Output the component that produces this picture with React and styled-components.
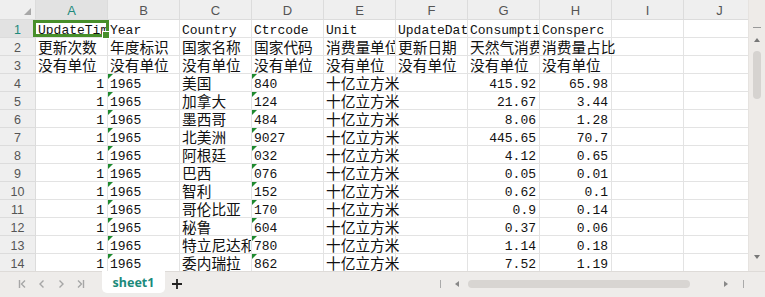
import React from "react";
import styled, { createGlobalStyle, css } from "styled-components";

const Global = createGlobalStyle`
  html, body { margin: 0; padding: 0; background: #fff; overflow: hidden; }
  #root { width: 765px; height: 297px; }
`;

const COLS = ["A", "B", "C", "D", "E", "F", "G", "H", "I", "J"];

const rows = [
  ["UpdateTime", "Year", "Country", "Ctrcode", "Unit", "UpdateDate", "Consumption", "Consperc"],
  ["更新次数", "年度标识", "国家名称", "国家代码", "消费量单位", "更新日期", "天然气消费量", "消费量占比"],
  ["没有单位", "没有单位", "没有单位", "没有单位", "没有单位", "没有单位", "没有单位", "没有单位"],
];
const data = [
  ["美国", "840", "415.92", "65.98"],
  ["加拿大", "124", "21.67", "3.44"],
  ["墨西哥", "484", "8.06", "1.28"],
  ["北美洲", "9027", "445.65", "70.7"],
  ["阿根廷", "032", "4.12", "0.65"],
  ["巴西", "076", "0.05", "0.01"],
  ["智利", "152", "0.62", "0.1"],
  ["哥伦比亚", "170", "0.9", "0.14"],
  ["秘鲁", "604", "0.37", "0.06"],
  ["特立尼达和多巴哥", "780", "1.14", "0.18"],
  ["委内瑞拉", "862", "7.52", "1.19"],
];

const grid = [
  ...rows.map((r) => r.map((v) => ({ v }))),
  ...data.map(([c, code, cons, perc]) => [
    { v: "1", num: true },
    { v: "1965", flag: true },
    { v: c },
    { v: code, flag: true },
    { v: "十亿立方米" },
    { v: "" },
    { v: cons, num: true },
    { v: perc, num: true },
  ]),
].map((r) => [...r, { v: "" }, { v: "" }]);

const isCjk = (s) => /[\u3400-\u9fff]/.test(s);

const Frame = styled.div`
  width: 765px;
  height: 297px;
  display: grid;
  grid-template-rows: 1fr 26px;
  overflow: hidden;
`;

const Main = styled.div`
  display: grid;
  grid-template-columns: 1fr 17px;
  min-height: 0;
  overflow: hidden;
`;

const Sheet = styled.div`
  display: grid;
  grid-template-columns: 36px repeat(10, 72px);
  grid-template-rows: 20px repeat(14, 18px);
  overflow: hidden;
  min-width: 0;
`;

const HeadBase = css`
  box-sizing: border-box;
  display: flex;
  align-items: center;
  justify-content: center;
  font-family: "Liberation Sans", Arial, sans-serif;
  font-size: 13px;
  border-right: 1px solid #dcdcdc;
  border-bottom: 1px solid #dcdcdc;
`;

const Corner = styled.div`
  ${HeadBase};
  background: #efefef;
  position: relative;
  &::after {
    content: "";
    position: absolute;
    right: 4px;
    bottom: 4px;
    border-left: 7px solid transparent;
    border-bottom: 7px solid #a8a8a8;
  }
`;

const ColHead = styled.div`
  ${HeadBase};
  background: ${(p) => (p.$active ? "#e2e2e2" : "#efefef")};
  color: ${(p) => (p.$active ? "#1f8a7c" : "#555")};
  padding-top: 1px;
`;

const RowHead = styled.div`
  ${HeadBase};
  background: ${(p) => (p.$active ? "#e2e2e2" : "#efefef")};
  color: ${(p) => (p.$active ? "#1f8a7c" : "#555")};
  font-size: 12.5px;
  padding-top: 2px;
`;

const Cell = styled.div`
  box-sizing: border-box;
  position: relative;
  border-right: 1px solid #e3e3e3;
  border-bottom: 1px solid #e3e3e3;
  z-index: ${(p) => (p.$selected ? 10 : p.$spill ? 2 : 1)};
  background: ${(p) => (p.$spill ? "transparent" : "#fff")};
  min-width: 0;
`;

const Selection = styled.span`
  position: absolute;
  left: -3px;
  top: 0;
  right: -2px;
  bottom: 0;
  border: 3px solid #478f2a;
  pointer-events: none;
  z-index: 5;
`;

const Handle = styled.span`
  position: absolute;
  right: -4px;
  bottom: -5px;
  width: 6px;
  height: 6px;
  background: #478f2a;
  border: 1px solid #fff;
  z-index: 6;
`;

const Text = styled.span`
  display: block;
  box-sizing: border-box;
  width: 100%;
  height: 100%;
  white-space: nowrap;
  overflow: ${(p) => (p.$spill ? "visible" : "hidden")};
  text-align: ${(p) => (p.$num ? "right" : "left")};
  padding: ${(p) => (p.$cjk ? "1px 3px 0 2px" : "3px 3px 0 2px")};
  color: #111;
  font-family: ${(p) =>
    p.$cjk
      ? `"Noto Sans CJK SC", "Noto Sans", sans-serif`
      : `"Liberation Mono", "DejaVu Sans Mono", monospace`};
  font-size: ${(p) => (p.$cjk ? "14.7px" : "13px")};
  line-height: 16px;
`;

const Flag = styled.span`
  position: absolute;
  left: 0;
  top: 0;
  width: 0;
  height: 0;
  border-top: 5px solid #1e8a2e;
  border-right: 5px solid transparent;
  z-index: 3;
`;

const VScroll = styled.div`
  background: #eeebe8;
  display: flex;
  flex-direction: column;
  align-items: center;
  border-left: 1px solid #e6e3e0;
`;

const Dash = styled.div`
  width: 8px;
  height: 1px;
  background: #999;
  margin-top: 27px;
`;

const ArrowUp = styled.div`
  margin-top: 10px;
  width: 0;
  height: 0;
  border-left: 3px solid transparent;
  border-right: 3px solid transparent;
  border-bottom: 4px solid #777;
`;

const VThumb = styled.div`
  margin-top: 9px;
  width: 8px;
  height: 48px;
  border-radius: 4px;
  background: #d6d3d0;
`;

const ArrowDown = styled.div`
  margin-top: auto;
  margin-bottom: 12px;
  width: 0;
  height: 0;
  border-left: 3px solid transparent;
  border-right: 3px solid transparent;
  border-top: 4px solid #777;
`;

const TabBar = styled.div`
  background: #eeecea;
  border-top: 1px solid #dedbd8;
  display: flex;
  align-items: flex-start;
  box-sizing: border-box;
`;

const Nav = styled.div`
  display: flex;
  align-items: center;
  height: 24px;
  padding-left: 13px;
  width: 89px;
  box-sizing: border-box;
`;

const NavBtn = styled.span`
  width: 21px;
  display: flex;
  justify-content: center;
  color: #a6a6a6;
  svg { display: block; }
`;

const Tab = styled.div`
  margin-left: 13px;
  width: 63px;
  height: 22px;
  background: #fff;
  border-radius: 0 0 5px 5px;
  display: flex;
  align-items: center;
  justify-content: center;
  font-family: "Noto Sans", "Liberation Sans", sans-serif;
  font-weight: 700;
  font-size: 12.5px;
  color: #1b8a7b;
  margin-top: -1px;
`;

const Plus = styled.div`
  margin-left: 6px;
  height: 24px;
  display: flex;
  align-items: center;
  color: #222;
  svg { display: block; }
`;

const HScroll = styled.div`
  margin-left: auto;
  width: 325px;
  height: 24px;
  display: flex;
  align-items: center;
  padding-right: 17px;
  box-sizing: border-box;
`;

const Tick = styled.span`
  width: 1px;
  height: 8px;
  background: #aaa;
  margin-left: ${(p) => p.$m};
`;

const TriLeft = styled.span`
  width: 0;
  height: 0;
  border-top: 3px solid transparent;
  border-bottom: 3px solid transparent;
  border-right: 4px solid #888;
  margin-left: 14px;
`;

const TriRight = styled.span`
  width: 0;
  height: 0;
  border-top: 3px solid transparent;
  border-bottom: 3px solid transparent;
  border-left: 4px solid #888;
  margin-left: 34px;
`;

const HThumb = styled.span`
  margin-left: 9px;
  width: 222px;
  height: 8px;
  border-radius: 4px;
  background: #d8d5d2;
`;

const Chevron = ({ d, bar }) => (
  <svg width="12" height="12" viewBox="0 0 12 12" fill="none" stroke="currentColor" strokeWidth="1.4">
    <path d={d} />
    {bar && <path d={bar} />}
  </svg>
);

export default function App() {
  return (
    <>
      <Global />
      <Frame>
        <Main>
          <Sheet>
            <Corner />
            {COLS.map((c) => (
              <ColHead key={c} $active={c === "A"}>
                {c}
              </ColHead>
            ))}
            {grid.map((row, ri) => (
              <React.Fragment key={ri}>
                <RowHead $active={ri === 0}>{ri + 1}</RowHead>
                {row.map((cell, ci) => {
                  const next = row[ci + 1];
                  const spill = Boolean(cell.v && next && !next.v);
                  const selected = ri === 0 && ci === 0;
                  return (
                    <Cell key={ci} $spill={spill} $selected={selected}>
                      {cell.flag && <Flag />}
                      <Text $num={cell.num} $cjk={isCjk(cell.v)} $spill={spill}>
                        {cell.v}
                      </Text>
                      {selected && (
                        <Selection>
                          <Handle />
                        </Selection>
                      )}
                    </Cell>
                  );
                })}
              </React.Fragment>
            ))}
          </Sheet>
          <VScroll>
            <Dash />
            <ArrowUp />
            <VThumb />
            <ArrowDown />
          </VScroll>
        </Main>
        <TabBar>
          <Nav>
            <NavBtn>
              <Chevron d="M8 2.5 L4.5 6 L8 9.5" bar="M2.5 2 V10" />
            </NavBtn>
            <NavBtn>
              <Chevron d="M7.5 2.5 L4 6 L7.5 9.5" />
            </NavBtn>
            <NavBtn>
              <Chevron d="M4.5 2.5 L8 6 L4.5 9.5" />
            </NavBtn>
            <NavBtn>
              <Chevron d="M4 2.5 L7.5 6 L4 9.5" bar="M9.5 2 V10" />
            </NavBtn>
          </Nav>
          <Tab>sheet1</Tab>
          <Plus>
            <svg width="12" height="12" viewBox="0 0 12 12" stroke="currentColor" strokeWidth="1.8">
              <path d="M6 1 V11 M1 6 H11" />
            </svg>
          </Plus>
          <HScroll>
            <Tick $m="0" />
            <TriLeft />
            <HThumb />
            <TriRight />
            <Tick $m="15px" />
          </HScroll>
        </TabBar>
      </Frame>
    </>
  );
}
